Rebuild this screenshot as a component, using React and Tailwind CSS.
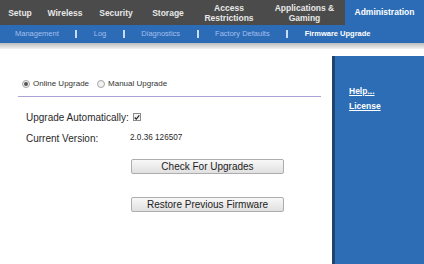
import React from 'react';

const topTabs = [
  { label: 'Setup', w: 'w-[40px]' },
  { label: 'Wireless', w: 'w-[50px]' },
  { label: 'Security', w: 'w-[52px]' },
  { label: 'Storage', w: 'w-[52px]' },
  { label: ['Access', 'Restrictions'], w: 'w-[70px]' },
  { label: ['Applications &', 'Gaming'], w: 'w-[81px]' },
];

const subLinks = ['Management', 'Log', 'Diagnostics', 'Factory Defaults'];

const Radio = ({ checked }) => (
  <span className="w-[8px] h-[8px] rounded-full border border-[#a5a5a5] bg-[#f2f2f2] flex items-center justify-center">
    {checked && <span className="w-[4px] h-[4px] rounded-full bg-[#555]" />}
  </span>
);

const Button = ({ children }) => (
  <button className="w-[153px] h-[15px] border border-[#adadad] rounded-[2px] bg-gradient-to-b from-[#f8f8f8] to-[#e0e0e0] text-[10px] leading-none text-[#222]">
    {children}
  </button>
);

const App = () => {
  return (
    <div className="w-[424px] h-[264px] overflow-hidden bg-white font-['Liberation_Sans',Arial,sans-serif]">
      {/* top tabs */}
      <div className="flex h-[25px] bg-[#4b4b4b]">
        {topTabs.map((t, i) => (
          <div
            key={i}
            className={`${t.w} flex flex-col items-center justify-center text-[8.5px] leading-[10px] font-bold text-[#e8e8e8]`}
          >
            {Array.isArray(t.label) ? t.label.map((l) => <span key={l}>{l}</span>) : t.label}
          </div>
        ))}
        <div className="flex-1 flex items-center justify-center bg-[#2c6cb6] text-[8.5px] font-bold text-white">
          Administration
        </div>
      </div>

      {/* sub nav */}
      <div className="flex items-center h-[18px] bg-[#2c6cb6] pl-[15px] text-[7.5px]">
        {subLinks.map((l) => (
          <React.Fragment key={l}>
            <span className="text-[#a3bff0]">{l}</span>
            <span className="mx-[16.5px] w-[2px] h-[8px] bg-[#c9dcf7]" />
          </React.Fragment>
        ))}
        <span className="font-bold text-white">Firmware Upgrade</span>
      </div>
      <div className="h-[6px] bg-gradient-to-b from-[#bcbcbc] to-[#f3f3f3]" />

      {/* body */}
      <div className="flex pt-[7px]">
        <div className="w-[332px] pl-[18px] pr-[11px]">
          <div className="flex items-center gap-[3px] pl-[4px] pt-[22px] pb-[6px] border-b border-[#aba3d6] text-[8px] text-[#333]">
            <Radio checked />
            <span className="mr-[5px]">Online Upgrade</span>
            <Radio />
            <span>Manual Upgrade</span>
          </div>

          <div className="pl-[8px] text-[10px] text-[#2a2a2a]">
            <div className="flex items-center h-[14px] mt-[13px]">
              <span className="w-[107px]">Upgrade Automatically:</span>
              <span className="w-[8px] h-[8px] border border-[#8a8a8a] bg-[#f4f4f4] flex items-center justify-center">
                <svg viewBox="0 0 8 8" className="w-[7px] h-[7px]">
                  <path d="M1 4 L3 6.2 L7 1.2" fill="none" stroke="#222" strokeWidth="1.6" />
                </svg>
              </span>
            </div>
            <div className="flex items-center h-[14px] mt-[7px]">
              <span className="w-[104px]">Current Version:</span>
              <span className="text-[8.2px]">2.0.36 126507</span>
            </div>
          </div>

          <div className="flex flex-col gap-[23px] pl-[113px] mt-[14px]">
            <Button>Check For Upgrades</Button>
            <Button>Restore Previous Firmware</Button>
          </div>
        </div>

        <div className="flex-1 h-[208px] bg-[#2d6db5] border-l-[3px] border-[#1e4470] pl-[14px] pt-[30px] flex flex-col gap-[5px] text-[8.5px] font-bold text-white">
          <span className="underline leading-[10px]">Help...</span>
          <span className="underline leading-[10px]">License</span>
        </div>
      </div>
    </div>
  );
};

export default App;
